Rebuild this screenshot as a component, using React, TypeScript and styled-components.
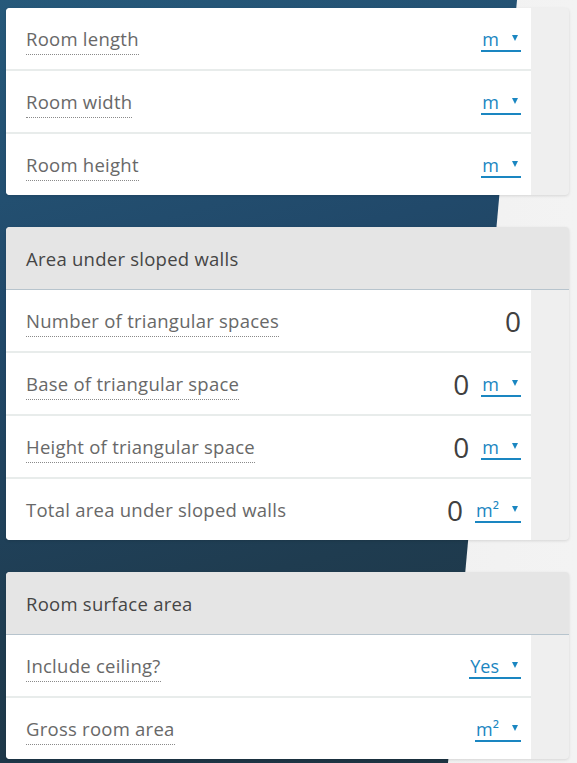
import React from 'react';
import styled, { createGlobalStyle } from 'styled-components';

const GlobalStyle = createGlobalStyle`
  html, body {
    margin: 0;
    padding: 0;
  }
  body {
    font-family: 'Open Sans', 'Noto Sans', sans-serif;
    overflow: hidden;
  }
`;

const Page = styled.div`
  position: relative;
  min-height: 763px;
  padding: 8px 8px 0 6px;
  box-sizing: border-box;
  background: linear-gradient(165deg, #26597a 0%, #21496a 35%, #1f3c50 70%, #1d3341 100%);

  &::before {
    content: '';
    position: absolute;
    inset: 0;
    background: linear-gradient(to right, #d9d9d9 0px, #ececec 40px, #f3f3f3 100%);
    clip-path: polygon(517px 0, 100% 0, 100% 100%, 448px 100%);
  }
`;

const Card = styled.section`
  position: relative;
  z-index: 1;
  width: 563px;
  margin-bottom: 32px;
  border-radius: 4px;
  overflow: hidden;
  background: #efefef;
  box-shadow: 0 1px 3px rgba(0, 0, 0, 0.12);
`;

const SectionHeader = styled.div`
  display: flex;
  align-items: center;
  height: 62px;
  padding-left: 20px;
  background: #e5e5e5;
  border-bottom: 1px solid #b7c4cd;
  color: #454545;
  font-size: 18.5px;
  letter-spacing: 0.25px;
`;

const Row = styled.div`
  display: grid;
  grid-template-columns: 1fr 38px;
`;

const RowMain = styled.div<{ $last?: boolean }>`
  display: flex;
  align-items: center;
  justify-content: space-between;
  height: 61px;
  padding: 0 10px 0 20px;
  background: #fff;
  border-bottom: ${(p) => (p.$last ? '0' : '2px solid #e8eceb')};
`;

const Label = styled.span<{ $dotted?: boolean }>`
  display: inline-block;
  color: #686868;
  font-size: 18.5px;
  letter-spacing: 0.25px;
  line-height: 24px;
  padding-bottom: 3px;
  margin-top: 4px;
  border-bottom: 1px dotted ${(p) => (p.$dotted ? '#8a8a8a' : 'transparent')};
`;

const ValueBox = styled.div`
  display: flex;
  align-items: center;
  gap: 12px;
`;

const Value = styled.span`
  color: #404040;
  font-size: 28px;
  line-height: 1;
`;

const UnitSelect = styled.span`
  display: flex;
  align-items: center;
  justify-content: space-between;
  gap: 13px;
  padding: 0 3px 0 1px;
  margin-top: 2px;
  color: #1a86c1;
  font-size: 18px;
  line-height: 22px;
  border-bottom: 2px solid #1a86c1;
`;

const Caret = styled.span`
  width: 0;
  height: 0;
  margin-top: -1px;
  border-left: 3.5px solid transparent;
  border-right: 3.5px solid transparent;
  border-top: 6px solid #1a86c1;
`;

type Field = {
  label: string;
  dotted?: boolean;
  value?: string;
  unit?: string;
};

const Section = ({ title, fields }: { title?: string; fields: Field[] }) => (
  <Card>
    {title && <SectionHeader>{title}</SectionHeader>}
    {fields.map((f, i) => (
      <Row key={f.label}>
        <RowMain $last={i === fields.length - 1}>
          <Label $dotted={f.dotted !== false}>{f.label}</Label>
          <ValueBox>
            {f.value && <Value>{f.value}</Value>}
            {f.unit && (
              <UnitSelect>
                {f.unit}
                <Caret />
              </UnitSelect>
            )}
          </ValueBox>
        </RowMain>
        <div />
      </Row>
    ))}
  </Card>
);

const App = () => (
  <>
    <GlobalStyle />
    <Page>
      <Section
        fields={[
          { label: 'Room length', unit: 'm' },
          { label: 'Room width', unit: 'm' },
          { label: 'Room height', unit: 'm' },
        ]}
      />
      <Section
        title="Area under sloped walls"
        fields={[
          { label: 'Number of triangular spaces', value: '0' },
          { label: 'Base of triangular space', value: '0', unit: 'm' },
          { label: 'Height of triangular space', value: '0', unit: 'm' },
          { label: 'Total area under sloped walls', value: '0', unit: 'm²', dotted: false },
        ]}
      />
      <Section
        title="Room surface area"
        fields={[
          { label: 'Include ceiling?', unit: 'Yes' },
          { label: 'Gross room area', unit: 'm²' },
        ]}
      />
    </Page>
  </>
);

export default App;
